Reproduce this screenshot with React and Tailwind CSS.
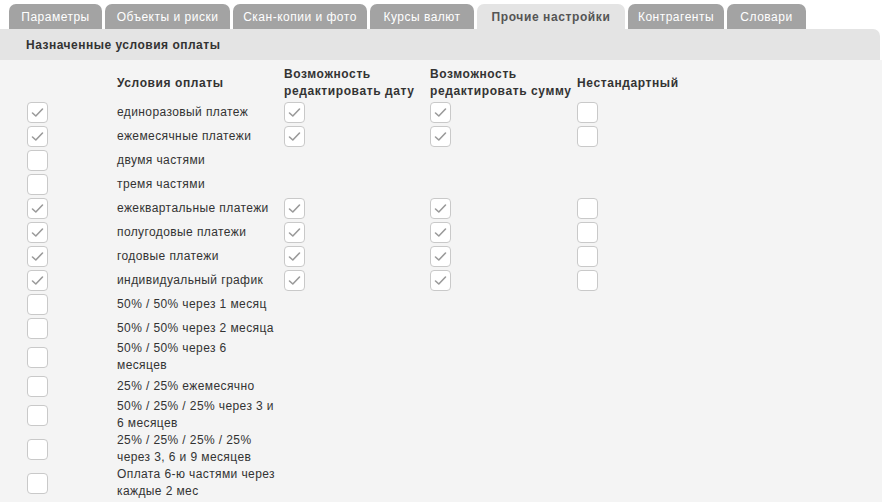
import React from "react";

const tabs = [
  { label: "Параметры", w: "w-[93px]" },
  { label: "Объекты и риски", w: "w-[125px]" },
  { label: "Скан-копии и фото", w: "w-[134px]" },
  { label: "Курсы валют", w: "w-[104px]" },
  { label: "Прочие настройки", w: "w-[148px]", active: true },
  { label: "Контрагенты", w: "w-[96px]" },
  { label: "Словари", w: "w-[79px]" },
];

const rows = [
  { lines: ["единоразовый платеж"], on: true, ext: [true, true, false] },
  { lines: ["ежемесячные платежи"], on: true, ext: [true, true, false] },
  { lines: ["двумя частями"], on: false },
  { lines: ["тремя частями"], on: false },
  { lines: ["ежеквартальные платежи"], on: true, ext: [true, true, false] },
  { lines: ["полугодовые платежи"], on: true, ext: [true, true, false] },
  { lines: ["годовые платежи"], on: true, ext: [true, true, false] },
  { lines: ["индивидуальный график"], on: true, ext: [true, true, false] },
  { lines: ["50% / 50% через 1 месяц"], on: false },
  { lines: ["50% / 50% через 2 месяца"], on: false },
  { lines: ["50% / 50% через 6", "месяцев"], on: false },
  { lines: ["25% / 25% ежемесячно"], on: false },
  { lines: ["50% / 25% / 25% через 3 и", "6 месяцев"], on: false },
  { lines: ["25% / 25% / 25% / 25%", "через 3, 6 и 9 месяцев"], on: false },
  { lines: ["Оплата 6-ю частями через", "каждые 2 мес"], on: false },
];

function Box({ checked }) {
  return (
    <div className="w-[21px] h-[21px] rounded-[4px] border border-[#c9c9c9] bg-white flex items-center justify-center">
      {checked && (
        <svg width="13" height="11" viewBox="0 0 13 11">
          <path d="M1.5 6 L4.8 9 L11.5 2" fill="none" stroke="#9a9a9a" strokeWidth="1.6" strokeLinecap="round" strokeLinejoin="round" />
        </svg>
      )}
    </div>
  );
}

export default function App() {
  return (
    <div className="w-[882px] h-[502px] overflow-hidden bg-white text-[12px] text-[#333]" style={{ fontFamily: '"Liberation Sans", Arial, sans-serif' }}>
      <div className="flex gap-[3px] pl-[9px] pt-[4px]">
        {tabs.map((t) => (
          <div
            key={t.label}
            className={
              t.active
                ? `${t.w} h-[25px] rounded-t-[7px] bg-[#e4e4e4] text-[#555] font-bold tracking-[0.6px] flex items-center justify-center`
                : `${t.w} h-[25px] rounded-t-[7px] bg-[#a3a3a3] text-white tracking-[0.5px] flex items-center justify-center`
            }
          >
            {t.label}
          </div>
        ))}
      </div>
      <div className="h-[31px] bg-[#e4e4e4] rounded-tr-[7px] mr-[2px] pl-[26px] flex items-center font-bold text-[#333] tracking-[0.5px]">
        Назначенные условия оплаты
      </div>
      <div className="bg-[#f4f4f4] h-full pt-[6px]">
        <div className="grid grid-cols-[117px_167px_146px_147px_1fr] leading-[17px]">
          <div className="h-[34px]"></div>
          <div className="h-[34px] flex items-center font-bold tracking-[0.6px]">Условия оплаты</div>
          <div className="h-[34px] font-bold tracking-[0.6px] whitespace-nowrap">Возможность<br />редактировать дату</div>
          <div className="h-[34px] font-bold tracking-[0.6px] whitespace-nowrap">Возможность<br />редактировать сумму</div>
          <div className="h-[34px] flex items-center font-bold tracking-[0.6px]">Нестандартный</div>
          {rows.map((r, i) => (
            <React.Fragment key={i}>
              <div className="min-h-[24px] flex items-center pl-[27px]">
                <Box checked={r.on} />
              </div>
              <div className="min-h-[24px] flex flex-col justify-center tracking-[0.4px] whitespace-nowrap">
                {r.lines.map((l) => (
                  <span key={l}>{l}</span>
                ))}
              </div>
              {[0, 1, 2].map((c) => (
                <div key={c} className="min-h-[24px] flex items-center">
                  {r.ext && <Box checked={r.ext[c]} />}
                </div>
              ))}
            </React.Fragment>
          ))}
        </div>
      </div>
    </div>
  );
}
